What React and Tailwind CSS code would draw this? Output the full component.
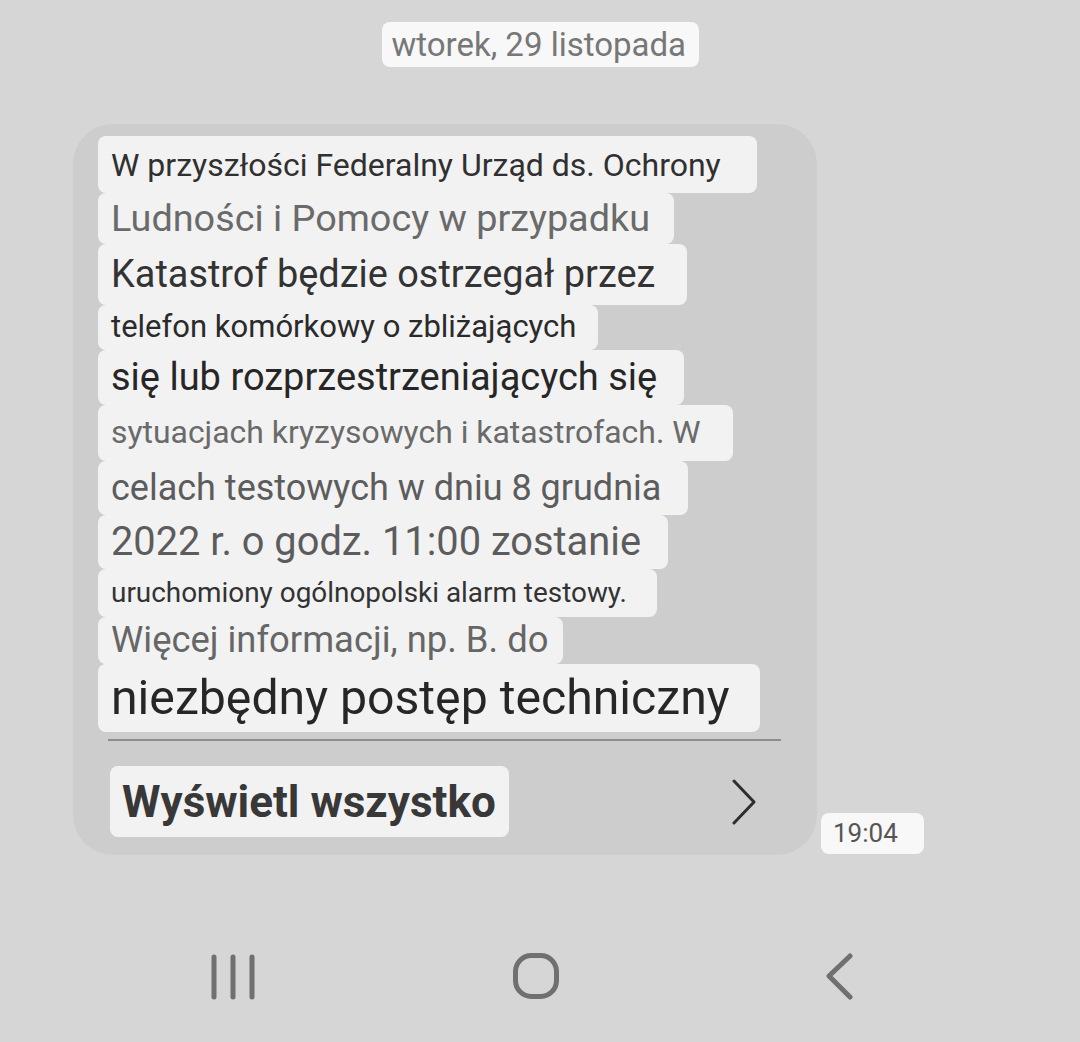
import React from 'react';

const lines = [
  { text: 'W przyszłości Federalny Urząd ds. Ochrony', box: 'w-[659px] h-[57px]', font: 'text-[32px] text-[#303030]' },
  { text: 'Ludności i Pomocy w przypadku', box: 'w-[576px] h-[51px]', font: 'text-[37.8px] text-[#6a6a6a]' },
  { text: 'Katastrof będzie ostrzegał przez', box: 'w-[589px] h-[61px]', font: 'text-[37.9px] text-[#333333]' },
  { text: 'telefon komórkowy o zbliżających', box: 'w-[500px] h-[45px]', font: 'text-[31px] text-[#2a2a2a]' },
  { text: 'się lub rozprzestrzeniających się', box: 'w-[586px] h-[55px]', font: 'text-[38px] text-[#262626]' },
  { text: 'sytuacjach kryzysowych i katastrofach. W', box: 'w-[635px] h-[56px]', font: 'text-[31.9px] text-[#6a6a6a]' },
  { text: 'celach testowych w dniu 8 grudnia', box: 'w-[590px] h-[54px]', font: 'text-[36px] text-[#5c5c5c]' },
  { text: '2022 r. o godz. 11:00 zostanie', box: 'w-[570px] h-[54px]', font: 'text-[39.8px] text-[#5c5c5c]' },
  { text: 'uruchomiony ogólnopolski alarm testowy.', box: 'w-[559px] h-[48px]', font: 'text-[27.9px] text-[#333333]' },
  { text: 'Więcej informacji, np. B. do', box: 'w-[465px] h-[47px]', font: 'text-[36.4px] text-[#666666]' },
  { text: 'niezbędny postęp techniczny', box: 'w-[662px] h-[68px]', font: 'text-[48.2px] text-[#262626]' },
];

function NavBar() {
  return (
    <div className="flex justify-between items-center pl-[209px] pr-[217px] mt-[97px]">
      <svg width="48" height="48" viewBox="0 0 48 48" fill="none" stroke="#707070" strokeWidth="5" strokeLinecap="round">
        <path d="M5 5v40M24 5v40M43 5v40" />
      </svg>
      <svg width="48" height="48" viewBox="0 0 48 48" fill="none" stroke="#707070" strokeWidth="5">
        <rect x="3.5" y="3.5" width="41" height="41" rx="16" />
      </svg>
      <svg width="48" height="48" viewBox="0 0 48 48" fill="none" stroke="#707070" strokeWidth="5" strokeLinecap="round" strokeLinejoin="round">
        <path d="M35 4L14 24l21 21" />
      </svg>
    </div>
  );
}

export default function App() {
  return (
    <div className="w-[1080px] h-[1042px] bg-[#d6d6d6] overflow-hidden font-['Roboto',sans-serif]">
      <div className="flex justify-center pt-[22px]">
        <div className="h-[45px] w-[317px] pl-[10px] rounded-lg bg-[#f8f8f8] flex items-center text-[33px] text-[#777777] whitespace-nowrap">
          wtorek, 29 listopada
        </div>
      </div>

      <div className="flex items-end gap-[4px] ml-[73px] mt-[57px]">
        <div className="w-[744px] rounded-[40px] bg-[#cdcdcd] pt-[12px] pb-[18px]">
          <div className="pl-[25px] flex flex-col">
            {lines.map((l) => (
              <div key={l.text} className={`${l.box} rounded-lg bg-[#f2f2f2] pl-[13px] flex items-center whitespace-nowrap ${l.font}`}>
                {l.text}
              </div>
            ))}
          </div>
          <div className="ml-[35px] w-[673px] h-[2px] bg-[#8c8c8c] mt-[7px]" />
          <div className="flex items-center justify-between pl-[37px] pr-[60px] mt-[25px]">
            <div className="w-[399px] h-[71px] rounded-lg bg-[#f2f2f2] pl-[12px] flex items-center text-[44px] font-bold text-[#383838] whitespace-nowrap">
              Wyświetl wszystko
            </div>
            <svg width="26" height="46" viewBox="0 0 26 46" fill="none" stroke="#2e2e2e" strokeWidth="3" strokeLinecap="round" strokeLinejoin="round">
              <path d="M3 2l20 21L3 44" />
            </svg>
          </div>
        </div>
        <div className="h-[41px] w-[103px] mb-[1px] rounded-lg bg-[#f8f8f8] pl-[12px] flex items-center text-[26px] text-[#555555]">
          19:04
        </div>
      </div>

      <NavBar />
    </div>
  );
}
